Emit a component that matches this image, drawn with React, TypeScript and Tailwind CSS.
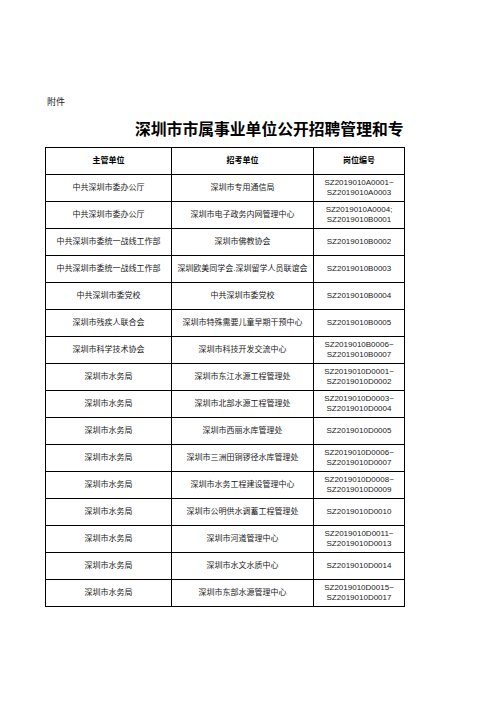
import React from 'react';

const rows: [string, string, string[]][] = [
    ['中共深圳市委办公厅', '深圳市专用通信局', ['SZ2019010A0001~', 'SZ2019010A0003']],
    ['中共深圳市委办公厅', '深圳市电子政务内网管理中心', ['SZ2019010A0004;', 'SZ2019010B0001']],
    ['中共深圳市委统一战线工作部', '深圳市佛教协会', ['SZ2019010B0002']],
    ['中共深圳市委统一战线工作部', '深圳欧美同学会.深圳留学人员联谊会', ['SZ2019010B0003']],
    ['中共深圳市委党校', '中共深圳市委党校', ['SZ2019010B0004']],
    ['深圳市残疾人联合会', '深圳市特殊需要儿童早期干预中心', ['SZ2019010B0005']],
    ['深圳市科学技术协会', '深圳市科技开发交流中心', ['SZ2019010B0006~', 'SZ2019010B0007']],
    ['深圳市水务局', '深圳市东江水源工程管理处', ['SZ2019010D0001~', 'SZ2019010D0002']],
    ['深圳市水务局', '深圳市北部水源工程管理处', ['SZ2019010D0003~', 'SZ2019010D0004']],
    ['深圳市水务局', '深圳市西丽水库管理处', ['SZ2019010D0005']],
    ['深圳市水务局', '深圳市三洲田铜锣径水库管理处', ['SZ2019010D0006~', 'SZ2019010D0007']],
    ['深圳市水务局', '深圳市水务工程建设管理中心', ['SZ2019010D0008~', 'SZ2019010D0009']],
    ['深圳市水务局', '深圳市公明供水调蓄工程管理处', ['SZ2019010D0010']],
    ['深圳市水务局', '深圳市河道管理中心', ['SZ2019010D0011~', 'SZ2019010D0013']],
    ['深圳市水务局', '深圳市水文水质中心', ['SZ2019010D0014']],
    ['深圳市水务局', '深圳市东部水源管理中心', ['SZ2019010D0015~', 'SZ2019010D0017']],
];

const cell = 'border border-black text-center align-middle p-0';

export default function App() {
    return (
        <div
            className="min-h-[702px] w-[496px] bg-white pt-[96px] pl-[45px] text-[#222]"
            style={{ fontFamily: '"Liberation Sans", "Noto Sans CJK SC", sans-serif' }}
        >
            <div className="pl-[2px] text-[9px] leading-[12px]">附件</div>

            {/* Title */}
            <div className="mt-[12px] w-[359px] overflow-hidden whitespace-nowrap pl-[90px] text-[15.8px] font-bold leading-[20px] text-black">
                深圳市市属事业单位公开招聘管理和专
            </div>

            <table className="mt-[7px] border-collapse table-fixed w-[359px] text-[8px] leading-[10px]">
                <colgroup>
                    <col className="w-[126px]" />
                    <col className="w-[142px]" />
                    <col className="w-[91px]" />
                </colgroup>
                <thead>
                    <tr className="h-[27px] font-bold text-black">
                        <th className={cell}>主管单位</th>
                        <th className={cell}>招考单位</th>
                        <th className={cell}>岗位编号</th>
                    </tr>
                </thead>
                <tbody>
                    {rows.map((r, i) => (
                        <tr key={i} className="h-[27px]">
                            <td className={cell}>{r[0]}</td>
                            <td className={`${cell} whitespace-nowrap`}>{r[1]}</td>
                            <td className={cell}>
                                {r[2].map((l) => (
                                    <div key={l}>{l}</div>
                                ))}
                            </td>
                        </tr>
                    ))}
                </tbody>
            </table>
        </div>
    );
}
